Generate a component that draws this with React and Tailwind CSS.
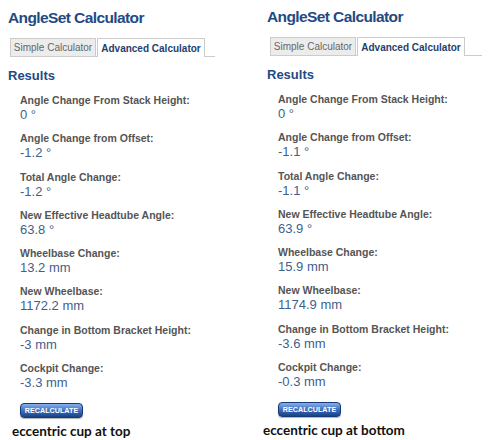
import React from 'react';

const leftResults = [
  { label: 'Angle Change From Stack Height:', value: '0 °' },
  { label: 'Angle Change from Offset:', value: '-1.2 °' },
  { label: 'Total Angle Change:', value: '-1.2 °' },
  { label: 'New Effective Headtube Angle:', value: '63.8 °' },
  { label: 'Wheelbase Change:', value: '13.2 mm' },
  { label: 'New Wheelbase:', value: '1172.2 mm' },
  { label: 'Change in Bottom Bracket Height:', value: '-3 mm' },
  { label: 'Cockpit Change:', value: '-3.3 mm' },
];

const rightResults = [
  { label: 'Angle Change From Stack Height:', value: '0 °' },
  { label: 'Angle Change from Offset:', value: '-1.1 °' },
  { label: 'Total Angle Change:', value: '-1.1 °' },
  { label: 'New Effective Headtube Angle:', value: '63.9 °' },
  { label: 'Wheelbase Change:', value: '15.9 mm' },
  { label: 'New Wheelbase:', value: '1174.9 mm' },
  { label: 'Change in Bottom Bracket Height:', value: '-3.6 mm' },
  { label: 'Cockpit Change:', value: '-0.3 mm' },
];

function Calculator({ results, caption, topClass, tabsClass, bodyClass, captionClass }) {
  return (
    <div className={`flex flex-col ${topClass}`}>
      <h1 className="pl-2 text-[15.5px] leading-[20px] font-bold tracking-[-0.6px] text-[#1f4a84]">
        AngleSet Calculator
      </h1>

      <div className={`mt-[10px] flex items-end border-b border-[#cccccc] ${tabsClass}`}>
        <div className="w-[86px] h-[18px] flex items-center justify-center bg-[#ececec] border-t border-l border-r border-[#cccccc] text-[10px] text-[#666666]">
          Simple Calculator
        </div>
        <div className="ml-px w-[108px] h-[19px] -mb-px flex items-center justify-center bg-white border-t border-l border-r border-[#cccccc] text-[10px] font-bold text-[#1f3f6e]">
          Advanced Calculator
        </div>
      </div>

      <h2 className="mt-[11px] pl-2 text-[13px] leading-[16px] font-bold text-[#1f4a84]">Results</h2>

      <div className={`mt-[10px] flex flex-col gap-[9.3px] ${bodyClass}`}>
        {results.map((r) => (
          <div key={r.label} className="flex flex-col">
            <span className="text-[10.5px] leading-[13px] font-bold text-[#555555]">{r.label}</span>
            <span className="text-[13px] leading-[16px] text-[#3f5f8c]">{r.value}</span>
          </div>
        ))}
      </div>

      <div className={`mt-[5px] ${bodyClass}`}>
        <button className="w-[63px] h-[15px] rounded-[4px] border border-[#163a74] bg-gradient-to-b from-[#86b0ec] via-[#3d70c0] to-[#1a4286] text-white text-[7.2px] font-bold leading-none shadow-[0_1px_1px_rgba(0,0,0,0.3)]">
          RECALCULATE
        </button>
      </div>

      <div
        className={`mt-[3px] text-[13.5px] leading-[17px] font-bold text-[#111111] ${captionClass}`}
        style={{ fontFamily: 'Lato, "Open Sans", sans-serif' }}
      >
        {caption}
      </div>
    </div>
  );
}

export default function App() {
  return (
    <div
      className="w-[500px] h-[440px] bg-white flex overflow-hidden"
      style={{ fontFamily: '"Liberation Sans", Arial, sans-serif' }}
    >
      <div className="w-[259px]">
        <Calculator
          results={leftResults}
          caption="eccentric cup at top"
          topClass="pt-2"
          tabsClass="ml-[10px] w-[205px]"
          bodyClass="pl-[20px]"
          captionClass="pl-[12px]"
        />
      </div>
      <div className="w-[241px]">
        <Calculator
          results={rightResults}
          caption="eccentric cup at bottom"
          topClass="pt-[7px]"
          tabsClass="ml-[11px] w-[212px]"
          bodyClass="pl-[19px]"
          captionClass="pl-[4px]"
        />
      </div>
    </div>
  );
}
